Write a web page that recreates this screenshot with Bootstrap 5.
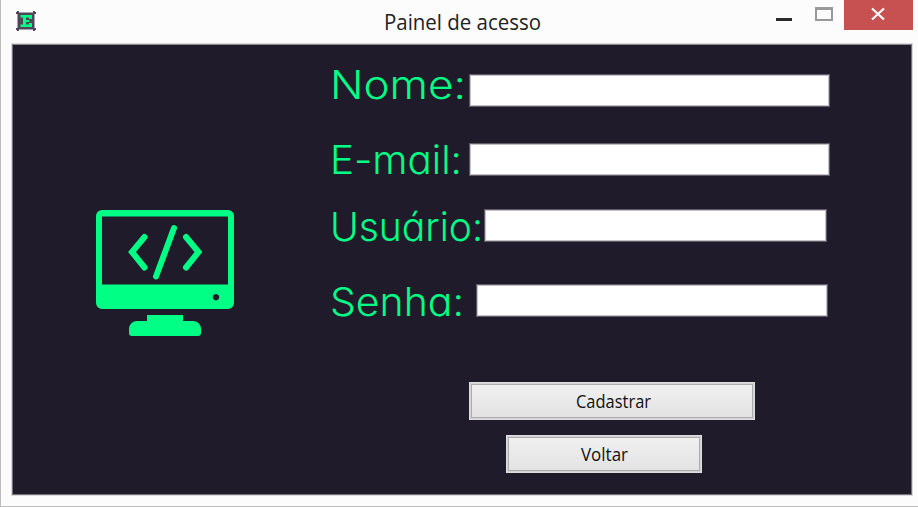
<!DOCTYPE html>
<html lang="pt-BR">
<head>
<meta charset="utf-8">
<meta name="viewport" content="width=device-width, initial-scale=1">
<title>Painel de acesso</title>
<link href="https://cdn.jsdelivr.net/npm/bootstrap@5.3.0/dist/css/bootstrap.min.css" rel="stylesheet">
<style>
  body { background: #fcfcfc; }
  .window { width: 918px; height: 507px; border-left: 1px solid #bdbdbd; border-bottom: 1px solid #bdbdbd; }
  .titlebar { height: 44px; padding-left: 14px; padding-right: 5px; }
  .titlebar svg, .panel svg { display: block; overflow: visible; flex: none; }
  .caption { font-family: "Open Sans", "Noto Sans", sans-serif; font-size: 21.5px; fill: #222; }
  .win-icon { margin-top: 10px; }
  .win-title { margin-left: 347px; }
  .win-controls { margin-left: auto; }
  .win-close { width: 69px; height: 30px; background: #c75050; margin-left: 11px; }
  .panel { margin-left: 11px; width: 900px; height: 451px; background: #201b2b; border: 1px solid #77737c; border-top-color: #8b8890; outline: 1px solid #d9d8da; outline-offset: 0; }
  .art { width: 315px; padding: 165px 0 0 83px; }
  .fields { padding-top: 29px; }
  .field-label { font-family: "Century Gothic", "Inter", sans-serif; font-feature-settings: "cv11"; font-size: 39.5px; font-weight: 300; fill: #00ff85; }
  .entry { height: 33px; border: 1px solid #5e5a66; border-radius: 0; background: #fff; box-shadow: inset 0 0 0 1px #c4c2c8; padding: 0 6px; outline: 0; }
  .gap-a { margin-top: 36px; }
  .gap-b { margin-top: 33px; }
  .gap-c { margin-top: 42px; }
  .w-a { width: 361px; } .w-b { width: 343px; } .w-c { width: 352px; }
  .push { height: 38px; border: 1px solid #dedede; border-radius: 0; padding: 1px; background: #d2d1d3; }
  .push-face { border: 1px solid #adadad; background: linear-gradient(#f0f0f0, #e3e3e3); }
  .push-text { font-family: "Open Sans", "Noto Sans", sans-serif; font-size: 17.5px; fill: #111; }
  .push-a { width: 286px; margin: 65px 0 0 141px; }
  .push-b { width: 196px; margin: 15px 0 0 178px; }
</style>
</head>
<body class="overflow-hidden">
<div class="window">
  <header class="titlebar d-flex align-items-start">
    <svg class="win-icon" width="22" height="22" viewBox="0 0 22 22">
      <path d="M2.500 2.500h17v17h-17z" fill="#51455a"/>
      <path d="M3 1v3M1 3h3M19 1v3M18 3h3M3 18v3M1 19h3M19 18v3M18 19h3" stroke="#51455a" stroke-width="2"/>
      <path d="M5.500 5H17v4h-3V7.500h-3V10h3v2h-3v2.500h3V13h3v4H5.500v-2.500H8v-7H5.500z" fill="#00ff85"/>
    </svg>
    <svg class="win-title" width="158" height="44"><text class="caption" x="0" y="30" textLength="157" lengthAdjust="spacingAndGlyphs">Painel de acesso</text></svg>
    <div class="win-controls d-flex">
      <svg width="57" height="30" viewBox="0 0 57 30">
        <path d="M0 18h16v3H0z" fill="#2b2b2b"/>
        <path d="M39 7h18v14H39zM41 10v9h14v-9z" fill="#999" fill-rule="evenodd"/>
      </svg>
      <div class="win-close">
        <svg width="69" height="30" viewBox="0 0 69 30"><path d="M28 8.500l12 11M40 8.500l-12 11" stroke="#fff" stroke-width="2.200"/></svg>
      </div>
    </div>
  </header>
  <main class="panel d-flex">
    <div class="art">
      <svg width="138" height="127" viewBox="0 0 138 127">
        <path fill="#00ff85" fill-rule="evenodd" d="M6 0H132a6 6 0 0 1 6 6V93a6 6 0 0 1-6 6H6a6 6 0 0 1-6-6V6a6 6 0 0 1 6-6ZM6 6.500V74.500H132V6.500ZM120 84a3.200 3.200 0 1 0 .01 0Z"/>
        <path fill="none" stroke="#00ff85" stroke-width="6" stroke-linecap="round" d="M48.500 27 36 42 48.500 57.500M90 27l12.500 15L90 57.500M78 18 60 66.500"/>
        <path fill="#00ff85" d="M51 105H87v6h10a8 8 0 0 1 8 8v4a3 3 0 0 1-3 3H36a3 3 0 0 1-3-3v-4a8 8 0 0 1 8-8H51Z"/>
      </svg>
    </div>
    <form class="fields">
      <div class="d-flex">
        <svg width="141" height="33"><text class="field-label" x="2" y="25" textLength="136" lengthAdjust="spacingAndGlyphs">Nome:</text></svg>
        <input class="entry w-a" type="text" aria-label="Nome">
      </div>
      <div class="d-flex gap-a">
        <svg width="141" height="33"><text class="field-label" x="2" y="31" textLength="132" lengthAdjust="spacingAndGlyphs">E-mail:</text></svg>
        <input class="entry w-a" type="text" aria-label="E-mail">
      </div>
      <div class="d-flex gap-b">
        <svg width="156" height="33"><text class="field-label" x="2" y="32" textLength="153" lengthAdjust="spacingAndGlyphs">Usuário:</text></svg>
        <input class="entry w-b" type="text" aria-label="Usuário">
      </div>
      <div class="d-flex gap-c">
        <svg width="148" height="33"><text class="field-label" x="2" y="32" textLength="134" lengthAdjust="spacingAndGlyphs">Senha:</text></svg>
        <input class="entry w-c" type="password" aria-label="Senha">
      </div>
      <button type="button" class="push push-a d-flex">
        <span class="push-face w-100 h-100 d-flex justify-content-center"><svg width="75" height="30"><text class="push-text" x="1" y="23" textLength="75" lengthAdjust="spacingAndGlyphs">Cadastrar</text></svg></span>
      </button>
      <button type="button" class="push push-b d-flex">
        <span class="push-face w-100 h-100 d-flex justify-content-center"><svg width="48" height="30"><text class="push-text" x="1" y="23" textLength="47" lengthAdjust="spacingAndGlyphs">Voltar</text></svg></span>
      </button>
    </form>
  </main>
</div>
<script src="https://cdn.jsdelivr.net/npm/bootstrap@5.3.0/dist/js/bootstrap.bundle.min.js"></script>
</body>
</html>
